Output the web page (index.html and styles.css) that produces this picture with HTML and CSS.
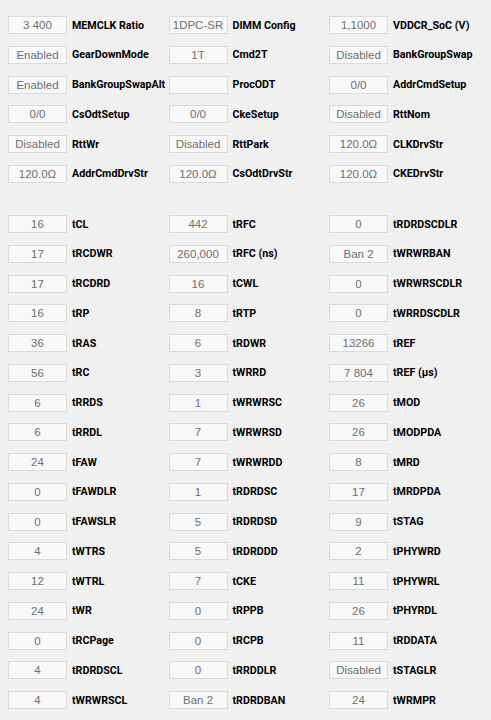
FILE: index.html
```html
<!DOCTYPE html>
<html>
<head>
<meta charset="utf-8">
<link rel="stylesheet" href="styles.css">
</head>
<body>
<div class="page">
  <div class="grid">
    <div class="cell"><span class="val">3 400</span><span class="lbl">MEMCLK Ratio</span></div>
    <div class="cell"><span class="val">1DPC-SR</span><span class="lbl">DIMM Config</span></div>
    <div class="cell"><span class="val">1,1000</span><span class="lbl">VDDCR_SoC (V)</span></div>
    <div class="cell"><span class="val">Enabled</span><span class="lbl">GearDownMode</span></div>
    <div class="cell"><span class="val">1T</span><span class="lbl">Cmd2T</span></div>
    <div class="cell"><span class="val">Disabled</span><span class="lbl">BankGroupSwap</span></div>
    <div class="cell"><span class="val">Enabled</span><span class="lbl">BankGroupSwapAlt</span></div>
    <div class="cell"><span class="val"></span><span class="lbl">ProcODT</span></div>
    <div class="cell"><span class="val">0/0</span><span class="lbl">AddrCmdSetup</span></div>
    <div class="cell"><span class="val">0/0</span><span class="lbl">CsOdtSetup</span></div>
    <div class="cell"><span class="val">0/0</span><span class="lbl">CkeSetup</span></div>
    <div class="cell"><span class="val">Disabled</span><span class="lbl">RttNom</span></div>
    <div class="cell"><span class="val">Disabled</span><span class="lbl">RttWr</span></div>
    <div class="cell"><span class="val">Disabled</span><span class="lbl">RttPark</span></div>
    <div class="cell"><span class="val">120.0Ω</span><span class="lbl">CLKDrvStr</span></div>
    <div class="cell"><span class="val">120.0Ω</span><span class="lbl">AddrCmdDrvStr</span></div>
    <div class="cell"><span class="val">120.0Ω</span><span class="lbl">CsOdtDrvStr</span></div>
    <div class="cell"><span class="val">120.0Ω</span><span class="lbl">CKEDrvStr</span></div>
  </div>
  <div class="grid timings">
    <div class="cell"><span class="val">16</span><span class="lbl">tCL</span></div>
    <div class="cell"><span class="val">442</span><span class="lbl">tRFC</span></div>
    <div class="cell"><span class="val">0</span><span class="lbl">tRDRDSCDLR</span></div>
    <div class="cell"><span class="val">17</span><span class="lbl">tRCDWR</span></div>
    <div class="cell"><span class="val">260,000</span><span class="lbl">tRFC (ns)</span></div>
    <div class="cell"><span class="val">Ban 2</span><span class="lbl">tWRWRBAN</span></div>
    <div class="cell"><span class="val">17</span><span class="lbl">tRCDRD</span></div>
    <div class="cell"><span class="val">16</span><span class="lbl">tCWL</span></div>
    <div class="cell"><span class="val">0</span><span class="lbl">tWRWRSCDLR</span></div>
    <div class="cell"><span class="val">16</span><span class="lbl">tRP</span></div>
    <div class="cell"><span class="val">8</span><span class="lbl">tRTP</span></div>
    <div class="cell"><span class="val">0</span><span class="lbl">tWRRDSCDLR</span></div>
    <div class="cell"><span class="val">36</span><span class="lbl">tRAS</span></div>
    <div class="cell"><span class="val">6</span><span class="lbl">tRDWR</span></div>
    <div class="cell"><span class="val">13266</span><span class="lbl">tREF</span></div>
    <div class="cell"><span class="val">56</span><span class="lbl">tRC</span></div>
    <div class="cell"><span class="val">3</span><span class="lbl">tWRRD</span></div>
    <div class="cell"><span class="val">7 804</span><span class="lbl">tREF (µs)</span></div>
    <div class="cell"><span class="val">6</span><span class="lbl">tRRDS</span></div>
    <div class="cell"><span class="val">1</span><span class="lbl">tWRWRSC</span></div>
    <div class="cell"><span class="val">26</span><span class="lbl">tMOD</span></div>
    <div class="cell"><span class="val">6</span><span class="lbl">tRRDL</span></div>
    <div class="cell"><span class="val">7</span><span class="lbl">tWRWRSD</span></div>
    <div class="cell"><span class="val">26</span><span class="lbl">tMODPDA</span></div>
    <div class="cell"><span class="val">24</span><span class="lbl">tFAW</span></div>
    <div class="cell"><span class="val">7</span><span class="lbl">tWRWRDD</span></div>
    <div class="cell"><span class="val">8</span><span class="lbl">tMRD</span></div>
    <div class="cell"><span class="val">0</span><span class="lbl">tFAWDLR</span></div>
    <div class="cell"><span class="val">1</span><span class="lbl">tRDRDSC</span></div>
    <div class="cell"><span class="val">17</span><span class="lbl">tMRDPDA</span></div>
    <div class="cell"><span class="val">0</span><span class="lbl">tFAWSLR</span></div>
    <div class="cell"><span class="val">5</span><span class="lbl">tRDRDSD</span></div>
    <div class="cell"><span class="val">9</span><span class="lbl">tSTAG</span></div>
    <div class="cell"><span class="val">4</span><span class="lbl">tWTRS</span></div>
    <div class="cell"><span class="val">5</span><span class="lbl">tRDRDDD</span></div>
    <div class="cell"><span class="val">2</span><span class="lbl">tPHYWRD</span></div>
    <div class="cell"><span class="val">12</span><span class="lbl">tWTRL</span></div>
    <div class="cell"><span class="val">7</span><span class="lbl">tCKE</span></div>
    <div class="cell"><span class="val">11</span><span class="lbl">tPHYWRL</span></div>
    <div class="cell"><span class="val">24</span><span class="lbl">tWR</span></div>
    <div class="cell"><span class="val">0</span><span class="lbl">tRPPB</span></div>
    <div class="cell"><span class="val">26</span><span class="lbl">tPHYRDL</span></div>
    <div class="cell"><span class="val">0</span><span class="lbl">tRCPage</span></div>
    <div class="cell"><span class="val">0</span><span class="lbl">tRCPB</span></div>
    <div class="cell"><span class="val">11</span><span class="lbl">tRDDATA</span></div>
    <div class="cell"><span class="val">4</span><span class="lbl">tRDRDSCL</span></div>
    <div class="cell"><span class="val">0</span><span class="lbl">tRRDDLR</span></div>
    <div class="cell"><span class="val">Disabled</span><span class="lbl">tSTAGLR</span></div>
    <div class="cell"><span class="val">4</span><span class="lbl">tWRWRSCL</span></div>
    <div class="cell"><span class="val">Ban 2</span><span class="lbl">tRDRDBAN</span></div>
    <div class="cell"><span class="val">24</span><span class="lbl">tWRMPR</span></div>
  </div>
</div>
</body>
</html>
```

FILE: styles.css
```css
html, body {
  margin: 0;
  padding: 0;
  background: #f0f0f0;
}
.page {
  padding: 16px 0 0 8px;
  font-family: "Liberation Sans", Arial, sans-serif;
}
.grid {
  display: grid;
  grid-template-columns: repeat(3, 160.5px);
  row-gap: 11.75px;
}
.timings {
  margin-top: 32.25px;
}
.cell {
  display: flex;
  align-items: center;
  height: 18px;
}
.val {
  box-sizing: border-box;
  width: 59px;
  height: 18px;
  flex: none;
  border: 1px solid #dadada;
  background: #f8f8f8;
  color: #6f6f6f;
  font-size: 11.5px;
  line-height: 16px;
  text-align: center;
  overflow: hidden;
  white-space: nowrap;
}
.lbl {
  margin-left: 5px;
  font-family: Roboto, "Noto Sans", sans-serif;
  font-weight: 700;
  font-size: 10.7px;
  color: #000;
  white-space: nowrap;
}
```
